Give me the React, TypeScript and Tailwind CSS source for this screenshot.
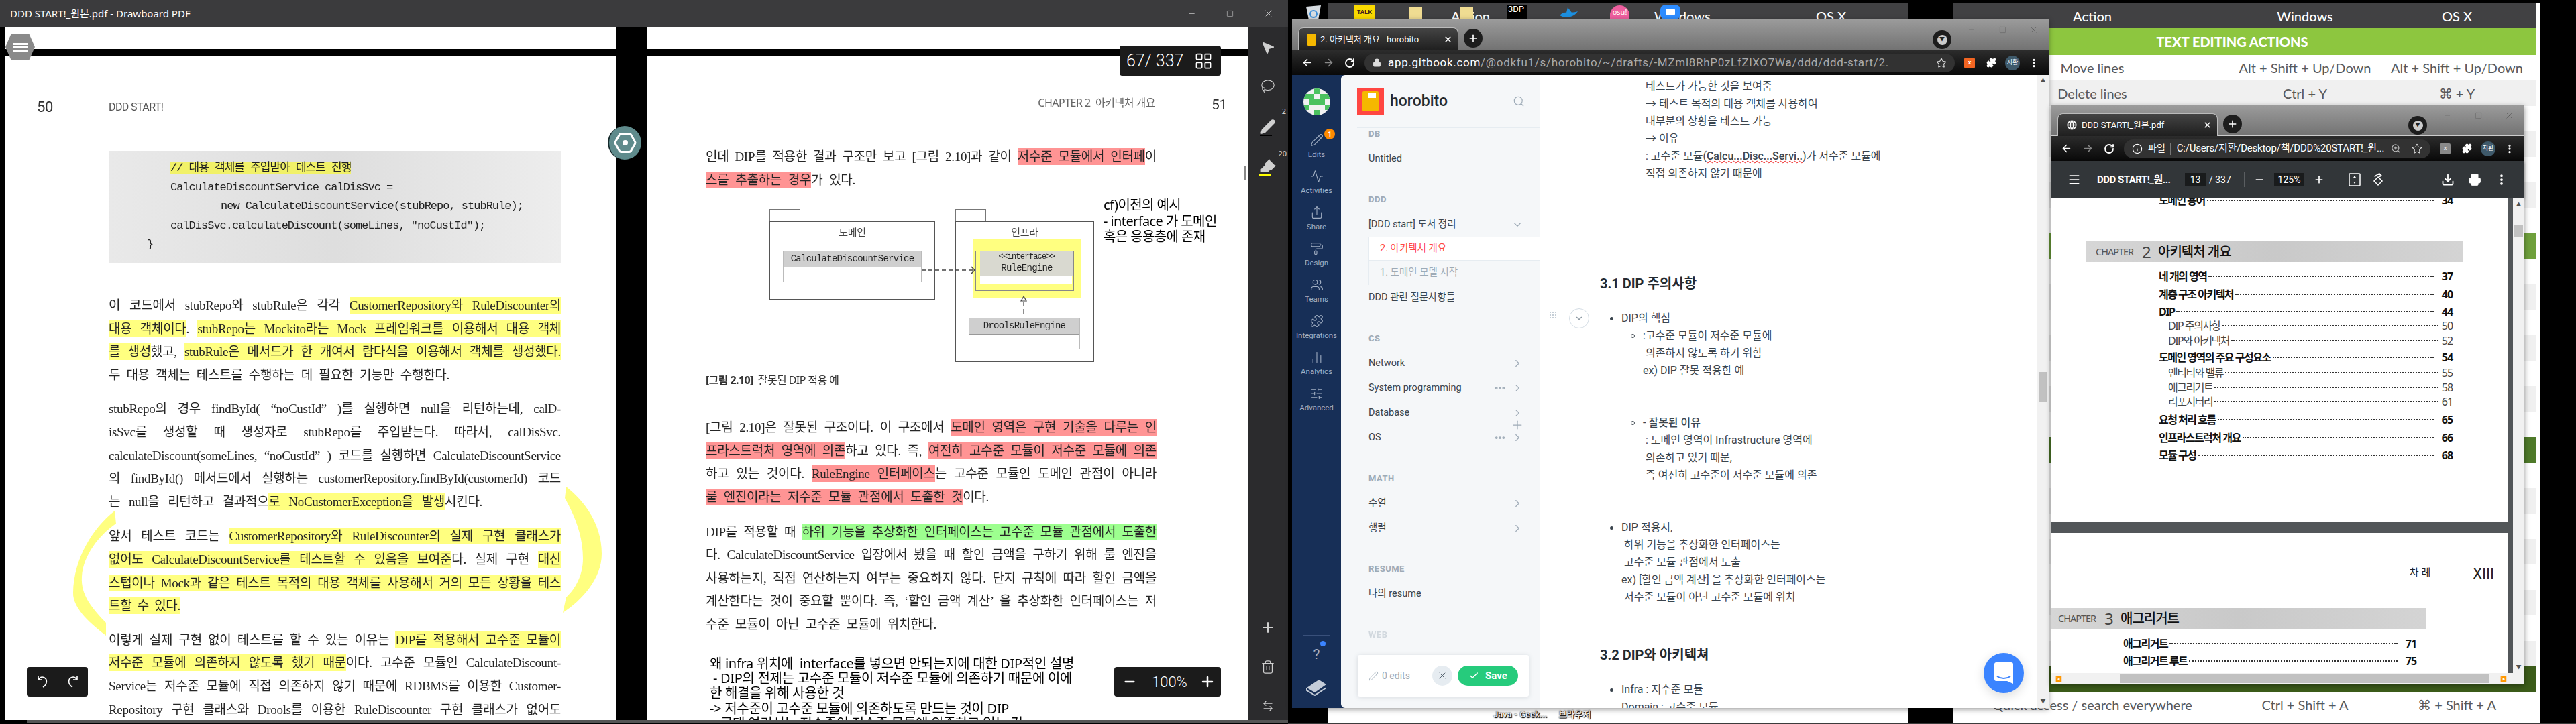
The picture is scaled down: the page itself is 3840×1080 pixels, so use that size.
import type { ReactNode } from "react"
import {
  Activity, ArrowLeft, ArrowLeftRight, ArrowRight, ChartNoAxesColumn, Check, ChevronDown, ChevronRight,
  Download, Ellipsis, EllipsisVertical, Globe, Hexagon, Highlighter, Info, Lasso, LayoutGrid, Lock, Menu,
  Minus, MousePointer2, PaintRoller, Pen, Pencil, Plus, Printer, Puzzle, RotateCw, Search, Share, SlidersHorizontal,
  Square, Star, Trash2, Users, X, ZoomIn,
} from "lucide-react"

const SERIF = "[font-family:'Liberation_Serif','Noto_Sans_CJK_KR',serif]"
const SANS = "[font-family:Roboto,'Noto_Sans_CJK_KR',sans-serif]"
const NOTO = "[font-family:'Noto_Sans','Noto_Sans_CJK_KR',sans-serif]"
const MONO = "[font-family:'Liberation_Mono','Noto_Sans_CJK_KR',monospace]"
const LATO = "[font-family:Lato,sans-serif]"

function Line({ children, className = "w-full" }: { children: ReactNode; className?: string }) {
  return <div className={`whitespace-nowrap text-justify [text-align-last:justify] ${className}`}>{children}</div>
}

const Y = ({ children }: { children: ReactNode }) => <span className="bg-[#ffff80] py-[2px]">{children}</span>
const R = ({ children }: { children: ReactNode }) => <span className="bg-[#ff9494] py-[2px]">{children}</span>
const G = ({ children }: { children: ReactNode }) => <span className="bg-[#9dff8f] py-[2px]">{children}</span>

function LeftPage() {
  return (
    <div className={`relative flex-1 overflow-hidden bg-white pl-[154px] text-[19px] leading-[34.6px] tracking-[-0.3px] text-[#262626] ${SERIF} blur-[0.3px]`}>
      <div className="flex h-[142px] items-start pt-[64px]">
        <span className={`-ml-[107px] w-[107px] text-[22px] leading-[26px] text-[#333] ${SANS}`}>50</span>
        <span className={`text-[16px] leading-[26px] tracking-[-0.6px] text-[#555] ${SANS}`}>DDD START!</span>
      </div>
      <div className={`h-[168px] w-[674px] bg-linear-to-r from-[#e9e9e9] via-[#dedede] to-[#ededed] pl-[92px] pt-[12px] text-[17px] leading-[28.5px] tracking-[-1px] text-[#222] ${MONO}`}>
        <div><span className="bg-[#f1f168]">// 대용 객체를 주입받아 테스트 진행</span></div>
        <div>CalculateDiscountService calDisSvc =</div>
        <div className="pl-[75px]">new CalculateDiscountService(stubRepo, stubRule);</div>
        <div>calDisSvc.calculateDiscount(someLines, "noCustId");</div>
        <div className="-ml-[35px]">{"}"}</div>
      </div>
      <div className="mt-[46px] w-[674px]">
        <Line>이 코드에서 stubRepo와 stubRule은 각각 <Y>CustomerRepository와 RuleDiscounter의</Y></Line>
        <Line><Y>대용 객체이다</Y>. <Y>stubRepo는 Mockito라는 Mock 프레임워크를 이용해서 대용 객체</Y></Line>
        <Line><Y>를 생성</Y>했고, <Y>stubRule은 메서드가 한 개여서 람다식을 이용해서 객체를 생성했다.</Y></Line>
        <Line className="w-[508px]">두 대용 객체는 테스트를 수행하는 데 필요한 기능만 수행한다.</Line>
      </div>
      <div className="mt-[16px] w-[674px]">
        <Line>stubRepo의 경우 findById( “noCustId” )를 실행하면 null을 리턴하는데, calD-</Line>
        <Line>isSvc를 생성할 때 생성자로 stubRepo를 주입받는다. 따라서, calDisSvc.</Line>
        <Line>calculateDiscount(someLines, “noCustId” ) 코드를 실행하면 CalculateDiscountService</Line>
        <Line>의 findById() 메서드에서 실행하는 customerRepository.findById(customerId) 코드</Line>
        <Line className="w-[557px]">는 null을 리턴하고 결과적으<Y>로 NoCustomerException을 발생</Y>시킨다.</Line>
      </div>
      <div className="mt-[17px] w-[674px]">
        <Line>앞서 테스트 코드는 <Y>CustomerRepository와 RuleDiscounter의 실제 구현 클래스가</Y></Line>
        <Line><Y>없어도 CalculateDiscountService를 테스트할 수 있음을 보여준</Y>다. 실제 구현 <Y>대신</Y></Line>
        <Line><Y>스텁이나 Mock과 같은 테스트 목적의 대용 객체를 사용해서 거의 모든 상황을 테스</Y></Line>
        <Line className="w-[107px]"><Y>트할 수 있다.</Y></Line>
      </div>
      <div className="mt-[16px] w-[674px]">
        <Line>이렇게 실제 구현 없이 테스트를 할 수 있는 이유는 <Y>DIP를 적용해서 고수준 모듈이</Y></Line>
        <Line><Y>저수준 모듈에 의존하지 않도록 했기 때문</Y>이다. 고수준 모듈인 CalculateDiscount-</Line>
        <Line>Service는 저수준 모듈에 직접 의존하지 않기 때문에 RDBMS를 이용한 Customer-</Line>
        <Line>Repository 구현 클래스와 Drools를 이용한 RuleDiscounter 구현 클래스가 없어도</Line>
      </div>
      {/* freehand highlighter strokes around the paragraph */}
      <svg className="absolute left-0 top-0" width="910" height="992" viewBox="0 0 910 992" fill="#ffff80">
        <path d="M163 679 C130 705 102 750 101 801 C100 825 130 850 150 865 L150 846 C130 825 112 805 114 777 C116 745 140 715 165 698 Z" />
        <path d="M836 643 C870 670 889 705 889 743 C889 780 860 812 831 831 L836 808 C850 795 861 775 861 750 C861 715 848 685 834 660 Z" />
      </svg>
    </div>
  )
}

function ClassBox({ label, className }: { label: string; className: string }) {
  return (
    <div className={`absolute flex h-[47px] flex-col border border-[#bbb] bg-white ${className}`}>
      <div className={`flex h-[24px] items-center justify-center border-b border-[#999] bg-[#cfcfcf] text-[14px] tracking-[-0.75px] text-[#222] ${MONO}`}>{label}</div>
    </div>
  )
}

function Diagram() {
  return (
    <div className="relative mt-[26px] h-[228px] w-[672px]">
      <div className="absolute left-[95px] top-0 h-[19px] w-[46px] border border-[#777]" />
      <div className="absolute left-[95px] top-[18px] h-[117px] w-[247px] border border-[#555]" />
      <div className={`absolute left-[95px] top-[24px] w-[247px] text-center text-[15px] leading-[20px] text-[#444] ${NOTO}`}>도메인</div>
      <ClassBox label="CalculateDiscountService" className="left-[115px] top-[62px] w-[207px]" />
      <div className="absolute left-[372px] top-0 h-[19px] w-[46px] border border-[#777]" />
      <div className="absolute left-[372px] top-[18px] h-[210px] w-[207px] border border-[#555]" />
      <div className={`absolute left-[372px] top-[24px] w-[207px] text-center text-[15px] leading-[20px] text-[#444] ${NOTO}`}>인프라</div>
      <div className="absolute left-[398px] top-[44px] h-[88px] w-[161px] bg-[#ffff80]" />
      <div className="absolute left-[402px] top-[62px] h-[60px] w-[147px] border border-[#888]" />
      <div className={`absolute left-[409px] top-[63px] flex h-[36px] w-[139px] flex-col items-center bg-[#d9d9d0] leading-[17px] tracking-[-0.75px] text-[#222] ${MONO}`}>
        <span className="text-[12px]">{"<<interface>>"}</span>
        <span className="text-[14px]">RuleEngine</span>
      </div>
      <div className="absolute left-[409px] top-[99px] h-[13px] w-[137px] bg-white" />
      <ClassBox label="DroolsRuleEngine" className="left-[392px] top-[162px] w-[166px]" />
      <svg className="absolute left-0 top-0" width="672" height="228" viewBox="0 0 672 228" fill="none" stroke="#444">
        <path d="M322 91 H398" strokeDasharray="6 4" strokeWidth="1.5" />
        <path d="M396 86 L401 91 L396 96" strokeWidth="1.5" />
        <path d="M474 130 L470 137 H478 Z" strokeWidth="1.2" />
        <path d="M474 138 V160" strokeDasharray="7 4" strokeWidth="1.2" />
      </svg>
      <div className={`absolute left-[593px] top-[-18px] whitespace-nowrap text-[20px] leading-[23.5px] tracking-[-0.6px] text-black ${NOTO}`}>
        <div>cf)이전의 예시</div>
        <div>- interface 가 도메인</div>
        <div>혹은 응용층에 존재</div>
      </div>
    </div>
  )
}

function RightPage() {
  return (
    <div className={`relative flex-1 overflow-hidden bg-white pl-[88px] text-[19px] leading-[34.6px] tracking-[-0.3px] text-[#262626] ${SERIF} blur-[0.3px]`}>
      <div className="flex h-[134px] w-[774px] items-start justify-end pt-[58px]">
        <span className={`text-[16px] leading-[24px] tracking-[-0.5px] text-[#666] ${NOTO}`}>CHAPTER 2&nbsp; 아키텍처 개요</span>
        <span className={`ml-[84px] w-[20px] text-[21px] leading-[30px] text-[#333] ${SANS}`}>51</span>
      </div>
      <div className="w-[672px]">
        <Line>인데 DIP를 적용한 결과 구조만 보고 [그림 2.10]과 같이 <R>저수준 모듈에서 인터페</R>이</Line>
        <Line className="w-[223px]"><R>스를 추출하는 경우</R>가 있다.</Line>
      </div>
      <Diagram />
      <div className={`mt-[15px] h-[25px] text-[16px] leading-[25px] tracking-[-0.6px] text-[#333] ${NOTO}`}>
        <span className="font-bold">[그림 2.10]</span>&nbsp; 잘못된 DIP 적용 예
      </div>
      <div className="mt-[41px] w-[672px]">
        <Line>[그림 2.10]은 잘못된 구조이다. 이 구조에서 <R>도메인 영역은 구현 기술을 다루는 인</R></Line>
        <Line><R>프라스트럭처 영역에 의존</R>하고 있다. 즉, <R>여전히 고수준 모듈이 저수준 모듈에 의존</R></Line>
        <Line>하고 있는 것이다. <R>RuleEngine 인터페이스</R>는 고수준 모듈인 도메인 관점이 아니라</Line>
        <Line className="w-[422px]"><R>룰 엔진이라는 저수준 모듈 관점에서 도출한 것</R>이다.</Line>
      </div>
      <div className="mt-[17px] w-[672px]">
        <Line>DIP를 적용할 때 <G>하위 기능을 추상화한 인터페이스는 고수준 모듈 관점에서 도출한</G></Line>
        <Line>다. CalculateDiscountService 입장에서 봤을 때 할인 금액을 구하기 위해 룰 엔진을</Line>
        <Line>사용하는지, 직접 연산하는지 여부는 중요하지 않다. 단지 규칙에 따라 할인 금액을</Line>
        <Line>계산한다는 것이 중요할 뿐이다. 즉, ‘할인 금액 계산’ 을 추상화한 인터페이스는 저</Line>
        <Line className="w-[344px]">수준 모듈이 아닌 고수준 모듈에 위치한다.</Line>
      </div>
      <div className={`ml-[6px] mt-[29px] whitespace-nowrap text-[20px] leading-[22.4px] tracking-[-0.3px] text-black ${NOTO}`}>
        <div>왜 infra 위치에&nbsp; interface를 넣으면 안되는지에 대한 DIP적인 설명</div>
        <div>&nbsp;- DIP의 전제는 고수준 모듈이 저수준 모듈에 의존하기 때문에 이에</div>
        <div>한 해결을 위해 사용한 것</div>
        <div>-&gt; 저수준이 고수준 모듈에 의존하도록 만드는 것이 DIP</div>
        <div>&nbsp;- 구태 여기서는 저수준이 저수준 모듈에 의존하고 있는 것</div>
      </div>
    </div>
  )
}

function Drawboard() {
  const badge = "flex items-center rounded-[4px] bg-[#1b1b1b] text-white"
  return (
    <div className={`absolute left-0 top-0 flex h-[1080px] w-[1920px] flex-col bg-black ${NOTO}`}>
      <div className="flex h-[40px] shrink-0 items-center justify-between bg-[#3b3b3d] pl-[15px] text-white">
        <span className="text-[15px]">DDD START!_원본.pdf - Drawboard PDF</span>
        <div className="flex">
          <div className="flex w-[57px] items-center justify-center"><Minus size={13} strokeWidth={1} /></div>
          <div className="flex w-[57px] items-center justify-center"><Square size={11} strokeWidth={1} /></div>
          <div className="flex w-[58px] items-center justify-center"><X size={16} strokeWidth={1} /></div>
        </div>
      </div>
      <div className="flex h-[1034px] min-h-0">
        <div className="ml-[8px] flex w-[910px] shrink-0 flex-col">
          <div className="h-[33px] bg-white" />
          <div className="h-[10px] bg-black" />
          <LeftPage />
        </div>
        <div className="w-[46px] shrink-0" />
        <div className="flex w-[896px] shrink-0 flex-col">
          <div className="h-[33px] bg-white" />
          <div className="h-[10px] bg-black" />
          <RightPage />
        </div>
        <div className="relative flex w-[60px] shrink-0 flex-col items-center bg-[#2b2b2d] text-[#cfcfcf]">
          <MousePointer2 className="mt-[20px]" size={22} strokeWidth={1.5} fill="#cfcfcf" />
          <Lasso className="mt-[36px]" size={22} strokeWidth={1.2} />
          <div className="relative mt-[37px]">
            <Pen size={24} strokeWidth={1.5} fill="#cfcfcf" />
            <div className="absolute bottom-[-2px] left-0 h-[2px] w-[18px] bg-black" />
            <span className="absolute -right-[15px] -top-[19px] text-[11px]">2</span>
          </div>
          <div className="relative mt-[33px]">
            <Highlighter size={26} strokeWidth={1.3} fill="#cfcfcf" />
            <div className="absolute -bottom-[3px] left-0 h-[3px] w-[18px] bg-[#ffff00]" />
            <span className="absolute -right-[15px] -top-[13px] text-[11px]">20</span>
          </div>
          <div className="absolute left-[-5px] top-[208px] h-[20px] w-[2px] bg-[#888]" />
          <div className="mt-auto h-px w-[40px] bg-[#444]" />
          <Plus className="mt-[18px]" size={24} strokeWidth={2} />
          <Trash2 className="mt-[36px]" size={22} strokeWidth={1.3} />
          <div className="mt-[17px] h-px w-[40px] bg-[#444]" />
          <ArrowLeftRight className="mb-[12px] mt-[20px]" size={18} strokeWidth={1.5} />
        </div>
      </div>
      <div className="h-[6px] shrink-0 pl-[40px]"><div className="h-[4px] bg-[#555]" /></div>

      {/* overlays */}
      <div className="absolute left-[8px] top-[50px] flex h-[40px] w-[44px] flex-col items-center justify-center gap-[2px] bg-[#8a8a8a] [clip-path:polygon(20%_0,80%_0,100%_50%,80%_100%,20%_100%,0_50%)]">
        <span className="h-[3px] w-[21px] bg-white" /><span className="h-[3px] w-[21px] bg-white" /><span className="h-[3px] w-[21px] bg-white" />
      </div>
      <div className="absolute left-[906px] top-[188px] flex h-[50px] w-[50px] items-center justify-center rounded-full border-l-2 border-[#16292b] bg-[#5f8b8c]">
        <Hexagon className="rotate-90" size={36} strokeWidth={2} color="#fff" />
        <span className="absolute h-[8px] w-[8px] rounded-full bg-white" />
      </div>
      <div className={`${badge} absolute left-[1669px] top-[68px] h-[45px] w-[151px] pl-[10px] ${SANS}`}>
        <span className="text-[25px] font-light">67/ 337</span>
        <LayoutGrid className="ml-[16px]" size={28} strokeWidth={1.5} />
      </div>
      <div className={`${badge} absolute left-[40px] top-[995px] h-[44px] w-[91px] justify-center gap-[24px]`}>
        <svg width="20" height="24" viewBox="0 0 20 24" fill="none" stroke="#fff" strokeWidth="1.6"><path d="M4 8 C8 2 17 6 15 14 C14 17 12 19 10 20 M3 3 V9 H9" /></svg>
        <svg width="20" height="24" viewBox="0 0 20 24" fill="none" stroke="#fff" strokeWidth="1.6"><path d="M16 8 C12 2 3 6 5 14 C6 17 8 19 10 20 M17 3 V9 H11" /></svg>
      </div>
      <div className={`${badge} absolute left-[1661px] top-[995px] h-[44px] w-[159px] ${SANS}`}>
        <Minus className="ml-[12px]" size={22} strokeWidth={2.5} />
        <span className="ml-[22px] text-[22px] font-light">100%</span>
        <Plus className="ml-[18px]" size={24} strokeWidth={2.5} />
      </div>
    </div>
  )
}

function ChromeBar({ icon, title, pill, extColor }: { icon: ReactNode; title: string; pill: ReactNode; extColor: string }) {
  return (
    <div className={`${SANS} shrink-0 text-white`}>
      <div className="relative flex h-[46px] items-end border-b border-[#ccc] bg-linear-to-b from-[#9b9b9b] to-[#737373] pl-[9px]">
        <div className="-mb-px flex h-[34px] w-[239px] items-center rounded-t-[8px] border border-b-0 border-[#bbb] bg-linear-to-b from-[#444] to-[#1f1f1f] pl-[13px]">
          {icon}
          <span className="ml-[7px] flex-1 truncate text-[13px]">{title}</span>
          <X className="mr-[8px]" size={13} strokeWidth={3} />
        </div>
        <div className="mb-[3px] ml-[8px] flex h-[28px] w-[28px] items-center justify-center rounded-full bg-[#1d1d1d]"><Plus size={16} strokeWidth={2.5} /></div>
        <div className="absolute right-[145px] top-[16px] flex h-[28px] w-[28px] items-center justify-center rounded-full bg-[#1d1d1d]">
          <span className="flex h-[15px] w-[15px] items-center justify-center rounded-full bg-[#ccc] text-[8px] text-[#222]">▼</span>
        </div>
        <div className="absolute right-0 top-0 flex h-[30px] text-[#555]">
          <div className="flex w-[46px] items-center justify-center"><Minus size={12} strokeWidth={1} /></div>
          <div className="flex w-[46px] items-center justify-center"><Square size={11} strokeWidth={1} /></div>
          <div className="flex w-[46px] items-center justify-center"><X size={15} strokeWidth={1} /></div>
        </div>
      </div>
      <div className="flex h-[37px] items-center bg-linear-to-b from-[#2c2c2c] to-[#090909] pl-[6px] pr-[6px]">
        <div className="flex w-[32px] justify-center"><ArrowLeft size={17} strokeWidth={2.2} /></div>
        <div className="flex w-[32px] justify-center text-[#888]"><ArrowRight size={17} strokeWidth={2.2} /></div>
        <div className="flex w-[32px] justify-center"><RotateCw size={16} strokeWidth={2.8} /></div>
        <div className="ml-[6px] mr-[6px] flex h-[28px] min-w-0 flex-1 items-center rounded-full bg-[#323232] px-[12px]">{pill}</div>
        <div className="flex w-[32px] justify-center"><span className={`flex h-[16px] w-[16px] items-center justify-center rounded-[2px] text-[9px] font-bold ${extColor}`}>x</span></div>
        <div className="flex w-[32px] justify-center"><Puzzle size={15} fill="#fff" /></div>
        <div className="flex w-[32px] justify-center"><span className="flex h-[22px] w-[22px] items-center justify-center rounded-full bg-[#3f5a6b] text-[9px]">지환</span></div>
        <div className="flex w-[32px] justify-center"><EllipsisVertical size={16} strokeWidth={3} /></div>
      </div>
    </div>
  )
}

function NavItem({ icon, label, badge }: { icon: ReactNode; label: string; badge?: boolean }) {
  return (
    <div className="relative flex h-[54px] w-full flex-col items-center pt-[7px] text-[#a3b0c4]">
      <div className="flex h-[22px] items-center">{icon}</div>
      <span className="mt-[3px] text-[11.5px] leading-[14px]">{label}</span>
      {badge && <span className="absolute left-[48px] top-[1px] flex h-[16px] w-[16px] items-center justify-center rounded-full bg-[#ff8a00] text-[10px] font-bold text-white">1</span>}
    </div>
  )
}

function Avatar() {
  const cells = ["2,0", "0,1", "1,1", "3,1", "4,1", "1,2", "2,2", "3,2", "0,3", "4,3", "2,4"]
  return (
    <svg width="40" height="40" viewBox="0 0 40 40">
      <clipPath id="avatar-clip"><circle cx="20" cy="20" r="20" /></clipPath>
      <g clipPath="url(#avatar-clip)">
        <rect width="40" height="40" fill="#f2f2f2" />
        {cells.map((c) => {
          const [x, y] = c.split(",").map(Number)
          return <rect key={c} x={x * 8} y={y * 8} width="8" height="8" fill="#4cc25f" />
        })}
      </g>
    </svg>
  )
}

function SideItem({ label, dots, chevron = true }: { label: string; dots?: boolean; chevron?: boolean }) {
  return (
    <div className="flex h-[37px] items-center pr-[24px] text-[14.5px] text-[#3b454e]">
      <span className="flex-1">{label}</span>
      {dots && <Ellipsis className="mr-[8px]" size={18} color="#9daab6" strokeWidth={3} />}
      {chevron && <ChevronRight size={18} color="#9daab6" strokeWidth={1.5} />}
    </div>
  )
}

function SideHead({ label, className = "mt-[24px]" }: { label: string; className?: string }) {
  return <div className={`flex h-[37px] items-center text-[13px] font-bold tracking-[0.5px] text-[#9daab6] ${className}`}>{label}</div>
}

function Sidebar() {
  return (
    <div className="relative flex w-[297px] shrink-0 flex-col overflow-hidden rounded-l-[6px] border-r border-[#e6ecf1] bg-[#f5f7f9]">
      <div className="relative z-10 ml-[24px] flex h-[79px] shrink-0 items-center border-b border-[#e6ecf1] bg-[#f5f7f9] pr-[22px]">
        <div className="flex h-[40px] w-[40px] items-center justify-center bg-[#ff4642]">
          <span className="relative h-[30px] w-[24px] rounded-[2px] bg-[#f5b800]"><span className="absolute left-[9px] top-[3px] h-[7px] w-[11px] bg-white" /></span>
        </div>
        <span className="ml-[9px] flex-1 text-[23px] font-medium text-[#242a31]">horobito</span>
        <Search size={18} color="#9daab6" strokeWidth={1.5} />
      </div>
      <div className="-mt-[10px] pl-[41px]">
        <SideHead label="DB" className="" />
        <SideItem label="Untitled" chevron={false} />
        <SideHead label="DDD" />
        <div className="flex h-[37px] items-center pr-[24px] text-[14.5px] text-[#3b454e]">
          <span className="flex-1">[DDD start] 도서 정리</span>
          <ChevronDown size={18} color="#9daab6" strokeWidth={1.5} />
        </div>
        <div className="border-l border-[#e6ecf1]">
          <div className="flex h-[36px] items-center border-y border-[#e6ecf1] bg-white pl-[16px] text-[14.5px] text-[#ff4642]">2. 아키텍처 개요</div>
          <div className="flex h-[36px] items-center pl-[16px] text-[14.5px] text-[#9daab6]">1. 도메인 모델 시작</div>
        </div>
        <SideItem label="DDD 관련 질문사항들" chevron={false} />
        <SideHead label="CS" />
        <SideItem label="Network" />
        <SideItem label="System programming" dots />
        <div className="relative">
          <SideItem label="Database" />
          <Plus className="absolute bottom-[-10px] right-[23px]" size={20} color="#9daab6" strokeWidth={1.5} />
        </div>
        <SideItem label="OS" dots />
        <SideHead label="MATH" />
        <SideItem label="수열" />
        <SideItem label="행렬" />
        <SideHead label="RESUME" />
        <SideItem label="나의 resume" chevron={false} />
        <SideHead label="WEB" className="mt-[24px] opacity-40" />
      </div>
      <div className="absolute bottom-[17px] left-[25px] flex h-[62px] w-[255px] items-center rounded-[3px] bg-white pl-[16px] pr-[16px] shadow-[0_1px_6px_rgba(116,129,141,0.25)]">
        <Pencil size={15} color="#9daab6" strokeWidth={1.3} />
        <span className="ml-[5px] flex-1 text-[14px] text-[#9daab6]">0 edits</span>
        <div className="flex h-[30px] w-[30px] items-center justify-center rounded-full bg-[#e6ecf1]"><X size={16} color="#5c6975" strokeWidth={1.5} /></div>
        <div className="ml-[8px] flex h-[30px] w-[90px] items-center justify-center gap-[9px] rounded-full bg-[#26cb7c] text-[15px] font-bold text-white">
          <Check size={16} strokeWidth={2} />Save
        </div>
      </div>
    </div>
  )
}

function GitbookMain() {
  return (
    <div className="relative flex-1 overflow-hidden">
      <div className="h-full overflow-hidden bg-white pl-[89px] pt-[4px] text-[16px] leading-[26px] text-[#3b454e]">
        <div className="whitespace-nowrap pl-[68px]">
          <div>테스트가 가능한 것을 보여줌</div>
          <div>→ 테스트 목적의 대용 객체를 사용하여</div>
          <div>대부분의 상황을 테스트 가능</div>
          <div>→ 이유</div>
          <div>: 고수준 모듈(<span className="font-medium underline decoration-wavy decoration-[#e22] decoration-1">Calcu...Disc...Servi..</span>)가 저수준 모듈에</div>
          <div>직접 의존하지 않기 때문에</div>
        </div>
        <h2 className="mt-[136px] text-[20px] font-bold leading-[30px] text-[#242a31]">3.1 DIP 주의사항</h2>
        <div className="relative mt-[24px] flex items-center pl-[15px]">
          <span className="mr-[12px] h-[5px] w-[5px] rounded-full bg-[#3b454e]" />DIP의 핵심
          <div className="absolute left-[-75px] top-[3px] grid grid-cols-3 gap-[2px]">
            {Array.from({ length: 9 }, (_, i) => <span key={i} className="h-[2px] w-[2px] bg-[#c5ced6]" />)}
          </div>
          <div className="absolute left-[-46px] top-[-2px] flex h-[30px] w-[30px] items-center justify-center rounded-full border border-[#d3dce4]"><ChevronDown size={14} color="#88959f" /></div>
        </div>
        <div className="flex items-center pl-[46px]"><span className="mr-[12px] h-[6px] w-[6px] rounded-full border border-[#3b454e]" />:고수준 모듈이 저수준 모듈에</div>
        <div className="pl-[68px]">의존하지 않도록 하기 위함</div>
        <div className="pl-[64px]">ex) DIP 잘못 적용한 예</div>
        <div className="mt-[52px] flex items-center pl-[46px]"><span className="mr-[12px] h-[6px] w-[6px] rounded-full border border-[#3b454e]" />- <span className="ml-[4px] font-medium">잘못된 이유</span></div>
        <div className="pl-[68px]">: 도메인 영역이 Infrastructure 영역에</div>
        <div className="pl-[68px]">의존하고 있기 때문,</div>
        <div className="pl-[68px]">즉 여전히 고수준이 저수준 모듈에 의존</div>
        <div className="mt-[52px] flex items-center pl-[15px]"><span className="mr-[12px] h-[5px] w-[5px] rounded-full bg-[#3b454e]" />DIP 적용시,</div>
        <div className="pl-[36px]">하위 기능을 추상화한 인터페이스는</div>
        <div className="pl-[36px]">고수준 모듈 관점에서 도출</div>
        <div className="pl-[32px]">ex) [할인 금액 계산] 을 추상화한 인터페이스는</div>
        <div className="pl-[36px]">저수준 모듈이 아닌 고수준 모듈에 위치</div>
        <h2 className="mt-[58px] text-[20px] font-bold leading-[30px] text-[#242a31]">3.2 DIP와 아키텍쳐</h2>
        <div className="mt-[24px] flex items-center pl-[15px]"><span className="mr-[12px] h-[5px] w-[5px] rounded-full bg-[#3b454e]" />Infra : 저수준 모듈</div>
        <div className="pl-[32px]">Domain : 고수준 모듈</div>
      </div>
      <div className="absolute left-[661px] top-[862px] flex h-[60px] w-[60px] items-center justify-center rounded-full bg-[#3b84ff] shadow-[0_4px_16px_rgba(0,0,0,0.15)]">
        <svg width="28" height="32" viewBox="0 0 28 32"><path d="M3 0 H25 a3 3 0 0 1 3 3 V32 L19 28 H3 a3 3 0 0 1 -3 -3 V3 a3 3 0 0 1 3 -3 Z" fill="#fff" /><path d="M4 21 C10 25 18 25 24 21" fill="none" stroke="#3b84ff" strokeWidth="2" /></svg>
      </div>
    </div>
  )
}

function VScroll({ thumb, bg = "bg-[#f1f1f1]" }: { thumb: string; bg?: string }) {
  return (
    <div className={`relative flex w-[17px] shrink-0 flex-col items-center justify-between py-[5px] text-[8px] leading-[8px] text-[#505050] ${bg}`}>
      <span>▲</span>
      <div className={`absolute left-[2px] right-[2px] bg-[#c1c1c1] ${thumb}`} />
      <span>▼</span>
    </div>
  )
}

function GitbookWindow() {
  return (
    <div className="absolute left-[1926px] top-[29px] flex h-[1027px] w-[1128px] flex-col shadow-[0_2px_8px_rgba(0,0,0,0.4)]">
      <ChromeBar
        icon={<span className="h-[18px] w-[12px] rounded-[1px] bg-[#f5b800]" />}
        title="2. 아키텍처 개요 - horobito"
        extColor="bg-[#f26522] text-white"
        pill={<>
          <Lock size={13} fill="#ddd" color="#ddd" />
          <span className="ml-[10px] flex-1 truncate text-[17px] tracking-[0.7px] text-[#aaa]"><span className="text-white">app.gitbook.com</span>/@odkfu1/s/horobito/~/drafts/-MZml8RhP0zLfZlXO7Wa/ddd/ddd-start/2.</span>
          <Star size={16} color="#ddd" strokeWidth={1.6} />
        </>}
      />
      <div className={`flex min-h-0 flex-1 bg-[#172f57] ${SANS}`}>
        <div className="flex w-[73px] shrink-0 flex-col items-center pt-[20px]">
          <Avatar />
          <div className="mt-[19px] w-full">
            <NavItem badge label="Edits" icon={<Pencil size={20} strokeWidth={1.3} />} />
            <NavItem label="Activities" icon={<Activity size={20} strokeWidth={1.3} />} />
            <NavItem label="Share" icon={<Share size={20} strokeWidth={1.3} />} />
            <NavItem label="Design" icon={<PaintRoller size={20} strokeWidth={1.3} />} />
            <NavItem label="Teams" icon={<Users size={20} strokeWidth={1.3} />} />
            <NavItem label="Integrations" icon={<Puzzle size={20} strokeWidth={1.3} />} />
            <NavItem label="Analytics" icon={<ChartNoAxesColumn size={20} strokeWidth={1.3} />} />
            <NavItem label="Advanced" icon={<SlidersHorizontal size={20} strokeWidth={1.3} />} />
          </div>
          <div className="mt-auto h-px w-[40px] bg-[#39507a]" />
          <div className="relative mt-[14px] text-[21px] leading-[28px] text-[#a3b0c4]">?<span className="absolute -right-[9px] -top-[6px] h-[8px] w-[8px] rounded-full bg-[#3b84ff]" /></div>
          <svg className="mb-[18px] mt-[22px]" width="32" height="26" viewBox="0 0 32 26"><path d="M1 14 L19 2 L30 9 L13 21 Z" fill="#c4ccd8" /><path d="M1 14 V18 L13 25 L30 14" fill="none" stroke="#c4ccd8" strokeWidth="2" /></svg>
        </div>
        <Sidebar />
        <GitbookMain />
        <VScroll thumb="top-[443px] h-[45px]" />
      </div>
    </div>
  )
}

function TocRow({ title, page, bold = true, className = "", gap = "mr-[8px]" }: { title: string; page: string; bold?: boolean; className?: string; gap?: string }) {
  return (
    <div className={`flex h-[20px] items-center ${className} ${bold ? "font-bold text-[#111]" : "pl-[14px] text-[#444]"}`}>
      <span className="text-[16px] tracking-[-1.5px]">{title}</span>
      <span className={`ml-[3px] h-px flex-1 border-b-2 border-dotted border-[#333] ${gap}`} />
      <span className="w-[24px] text-center text-[16px] tracking-[-0.8px]">{page}</span>
    </div>
  )
}

function PdfBand({ n, title, className }: { n: string; title: string; className: string }) {
  return (
    <div className={`flex h-[31px] w-[563px] items-center bg-linear-to-r from-[#d6d6d6] via-[#c9c9c9] to-[#d4d4d4] pl-[15px] ${className}`}>
      <span className="w-[56px] text-[14.5px] tracking-[-1px] text-[#555]">CHAPTER</span>
      <span className="ml-[13px] w-[24px] text-[24px] text-[#444]">{n}</span>
      <span className="text-[20px] font-medium tracking-[-1px] text-[#111]">{title}</span>
    </div>
  )
}

function PdfWindow() {
  return (
    <div className="absolute left-[3058px] top-[157px] flex h-[864px] w-[705px] flex-col shadow-[0_2px_8px_rgba(0,0,0,0.4)]">
      <ChromeBar
        icon={<Globe size={15} strokeWidth={2.5} />}
        title="DDD START!_원본.pdf"
        extColor="bg-[#8a8a8a] text-[#ddd]"
        pill={<>
          <Info size={16} strokeWidth={1.7} />
          <span className="ml-[8px] text-[14px]">파일</span>
          <span className="ml-[7px] h-[18px] w-px bg-[#777]" />
          <span className="ml-[9px] flex-1 truncate text-[15px] tracking-[-0.2px]">C:/Users/지환/Desktop/책/DDD%20START!_원...</span>
          <ZoomIn className="mr-[16px]" size={15} color="#bbb" />
          <Star size={16} color="#ddd" strokeWidth={1.6} />
        </>}
      />
      <div className={`flex h-[56px] shrink-0 items-center bg-[#323639] text-white shadow-[0_2px_4px_rgba(0,0,0,0.3)] ${SANS}`}>
        <Menu className="ml-[24px]" size={20} />
        <span className="ml-[24px] w-[107px] whitespace-nowrap text-[15px] font-bold tracking-[-0.5px]">DDD START!_원...</span>
        <span className="ml-[24px] flex h-[20px] w-[31px] items-center justify-center bg-[#191b1c] text-[14px]">13</span>
        <span className="ml-[5px] w-[31px] whitespace-nowrap text-[14px]">/ 337</span>
        <span className="ml-[21px] h-[22px] w-px bg-[#5a5e61]" />
        <Minus className="ml-[14px]" size={16} strokeWidth={2.5} />
        <span className="ml-[14px] flex h-[20px] w-[45px] items-center justify-center bg-[#191b1c] text-[14px]">125%</span>
        <Plus className="ml-[14px]" size={16} strokeWidth={2.5} />
        <span className="ml-[14px] h-[22px] w-px bg-[#5a5e61]" />
        <svg className="ml-[20px]" width="20" height="20" viewBox="0 0 20 20" fill="none" stroke="#fff" strokeWidth="1.5"><rect x="2" y="1" width="16" height="18" rx="1" /><path d="M10 4 L8 7 H12 Z M10 16 L8 13 H12 Z" fill="#fff" stroke="none" /></svg>
        <svg className="ml-[15px]" width="20" height="22" viewBox="0 0 20 22" fill="none" stroke="#fff" strokeWidth="1.5"><path d="M10 7 L16 13 L10 19 L4 13 Z" /><path d="M5 7 C7 3 12 2 15 5 M11 1 L15 5 L11 7" /></svg>
        <Download className="ml-[84px]" size={20} strokeWidth={2.2} />
        <Printer className="ml-[20px]" size={20} fill="#fff" color="#fff" strokeWidth={1.2} />
        <EllipsisVertical className="ml-[20px]" size={20} strokeWidth={2.5} />
      </div>
      <div className={`flex min-h-0 flex-1 bg-[#525659] ${NOTO}`}>
        <div className="flex w-[680px] shrink-0 flex-col">
          <div className="relative h-[482px] overflow-hidden bg-white">
            <div className="-mt-[7px] ml-[160px] w-[442px]"><TocRow title="도메인 용어" page="34" /></div>
            <PdfBand n="2" title="아키텍처 개요" className="ml-[51px] mt-[51px]" />
            <div className="ml-[160px] mt-[11px] w-[442px]">
              <TocRow title="네 개의 영역" page="37" />
              <TocRow title="계층 구조 아키텍처" page="40" className="mt-[7px]" />
              <TocRow title="DIP" page="44" className="mt-[6px]" />
              <TocRow title="DIP 주의사항" page="50" bold={false} className="mt-[1px]" gap="mr-[1px]" />
              <TocRow title="DIP와 아키텍처" page="52" bold={false} className="mt-[2px]" gap="mr-[1px]" />
              <TocRow title="도메인 영역의 주요 구성요소" page="54" className="mt-[5px]" />
              <TocRow title="엔티티와 밸류" page="55" bold={false} className="mt-[3px]" gap="mr-[1px]" />
              <TocRow title="애그리거트" page="58" bold={false} className="mt-[2px]" gap="mr-[1px]" />
              <TocRow title="리포지터리" page="61" bold={false} className="mt-[1px]" gap="mr-[1px]" />
              <TocRow title="요청 처리 흐름" page="65" className="mt-[7px]" />
              <TocRow title="인프라스트럭처 개요" page="66" className="mt-[7px]" />
              <TocRow title="모듈 구성" page="68" className="mt-[6px]" />
            </div>
          </div>
          <div className="h-[17px] shrink-0" />
          <div className="relative min-h-0 flex-1 overflow-hidden bg-white">
            <div className="flex h-[112px] w-[660px] justify-end pt-[46px] text-[#222]">
              <span className="text-[15px] leading-[24px]">차 례</span>
              <span className={`ml-[63px] text-[22px] leading-[30px] ${SANS}`}>XIII</span>
            </div>
            <PdfBand n="3" title="애그리거트" className="-ml-[5px]" />
            <div className="ml-[107px] mt-[12px] w-[441px]">
              <TocRow title="애그리거트" page="71" />
              <TocRow title="애그리거트 루트" page="75" className="mt-[6px]" />
              <TocRow title="도메인 규칙과 일관성" page="76" bold={false} className="mt-[6px]" gap="mr-[1px]" />
            </div>
          </div>
        </div>
        <div className="w-[8px] shrink-0" />
        <VScroll thumb="top-[40px] h-[18px]" />
      </div>
      <div className="relative flex h-[17px] shrink-0 items-center justify-between bg-[#f1f1f1] px-[6px] text-[8px] text-[#505050]">
        <span>◀</span>
        <div className="absolute left-[102px] top-[2px] h-[13px] w-[551px] bg-[#c1c1c1]" />
        <span className="mr-[20px]">▶</span>
      </div>
    </div>
  )
}

const tableRows = [
  { bg: "bg-white", cols: ["Move lines", "Alt + Shift + Up/Down", "Alt + Shift + Up/Down"] },
  { bg: "bg-[#f0f0f0]", cols: ["Delete lines", "Ctrl + Y", "⌘ + Y"] },
  { bg: "bg-white" }, { bg: "bg-[#f0f0f0]" }, { bg: "bg-white" }, { bg: "bg-[#f0f0f0]" }, { bg: "bg-white" },
  { bg: "bg-[#6fa03c]" },
  { bg: "bg-white" }, { bg: "bg-[#f0f0f0]" }, { bg: "bg-white" }, { bg: "bg-[#f0f0f0]" }, { bg: "bg-white" }, { bg: "bg-[#f0f0f0]" }, { bg: "bg-white" },
  { bg: "bg-[#4f7a2a]" },
  { bg: "bg-white" }, { bg: "bg-[#f0f0f0]" }, { bg: "bg-white" }, { bg: "bg-[#f0f0f0]" }, { bg: "bg-white" }, { bg: "bg-[#f0f0f0]" }, { bg: "bg-white" }, { bg: "bg-[#f0f0f0]" },
]

function ShortcutTable() {
  return (
    <div className={`absolute left-[2911px] top-[5px] flex h-[1073px] w-[875px] flex-col bg-white pr-[6px] text-[20px] text-[#58595b] ${LATO}`}>
      <div className="grid h-[37px] shrink-0 grid-cols-[416px_218px_235px] items-center bg-[#414143] text-center font-medium text-white">
        <span>Action</span><span>Windows</span><span>OS X</span>
      </div>
      <div className="flex h-[40px] shrink-0 items-center justify-center bg-[#8dc63f] pr-[36px] text-[20px] font-black text-white">TEXT EDITING ACTIONS</div>
      {tableRows.map((row, i) => (
        <div key={i} className={`grid h-[38px] shrink-0 grid-cols-[416px_218px_235px] items-center text-center ${row.bg}`}>
          {row.cols?.map((c) => <span key={c}>{c}</span>)}
        </div>
      ))}
      <div className="flex h-[38px] shrink-0 items-center justify-center bg-[#3c5c1a] pr-[36px] font-black text-white">UNIVERSAL ACCESS</div>
      <div className="grid h-[38px] shrink-0 grid-cols-[416px_218px_235px] items-center bg-white text-center">
        <span>Quick access / search everywhere</span><span>Ctrl + Shift + A</span><span>⌘ + Shift + A</span>
      </div>
    </div>
  )
}

function BackTable() {
  return (
    <div className={`absolute left-[1979px] top-[5px] h-[1073px] w-[865px] bg-white ${LATO}`}>
      <div className="relative flex h-[37px] items-center bg-[#414143] text-[20px] font-medium text-white">
        <span className="absolute left-[184px]">Action</span>
        <span className="absolute left-[487px]">Windows</span>
        <span className="absolute left-[728px]">OS X</span>
      </div>
    </div>
  )
}

function DesktopIcons() {
  return (
    <>
      <svg className="absolute left-[1945px] top-[8px]" width="26" height="22" viewBox="0 0 26 22"><path d="M2 2 L24 0 L20 22 H6 Z" fill="#d7dde2" /><circle cx="13" cy="13" r="5" fill="none" stroke="#3c8ed8" strokeWidth="2" /></svg>
      <div className="absolute left-[2018px] top-[7px] flex h-[22px] w-[32px] items-center justify-center rounded-[3px] bg-[#f9d900] text-[9px] font-bold text-[#3c1e1e]">TALK</div>
      <div className="absolute left-[2100px] top-[10px] h-[19px] w-[20px] bg-[#f0dc92]" />
      <div className="absolute left-[2176px] top-[10px] h-[19px] w-[20px] bg-[#f0dc92]" />
      <div className={`absolute left-[2246px] top-[7px] h-[22px] w-[31px] bg-black pl-[2px] text-[13px] leading-[14px] text-white ${SANS}`}>3DP</div>
      <svg className="absolute left-[2323px] top-[11px]" width="31" height="18" viewBox="0 0 31 18"><path d="M2 12 C10 4 20 10 29 6 C24 14 12 18 2 12 Z M14 0 L20 8 L12 8 Z" fill="#1c8fe0" /></svg>
      <div className="absolute left-[2400px] top-[8px] flex h-[21px] w-[29px] items-center justify-center rounded-t-full bg-[#ee5f9f] text-[11px] text-white">osu!</div>
      <div className="absolute left-[2475px] top-[7px] flex h-[22px] w-[30px] items-center justify-center rounded-[8px] bg-[#2d8cff]"><span className="h-[10px] w-[14px] rounded-[2px] bg-white" /></div>
      <div className={`absolute left-[2226px] top-[1056px] flex gap-[17px] text-[13px] font-bold text-[#eee] [text-shadow:0_0_2px_#000,1px_1px_1px_#000] ${SANS}`}>
        <span>Java - Geek...</span><span>브라우저</span>
      </div>
    </>
  )
}

export default function App() {
  return (
    <div className="relative h-[1080px] w-[3840px] overflow-hidden bg-black">
      <Drawboard />
      <BackTable />
      <ShortcutTable />
      <DesktopIcons />
      <div className="absolute bottom-0 left-[1920px] h-[2px] w-[1920px] bg-[#3b3b3b]" />
      <GitbookWindow />
      <PdfWindow />
    </div>
  )
}
